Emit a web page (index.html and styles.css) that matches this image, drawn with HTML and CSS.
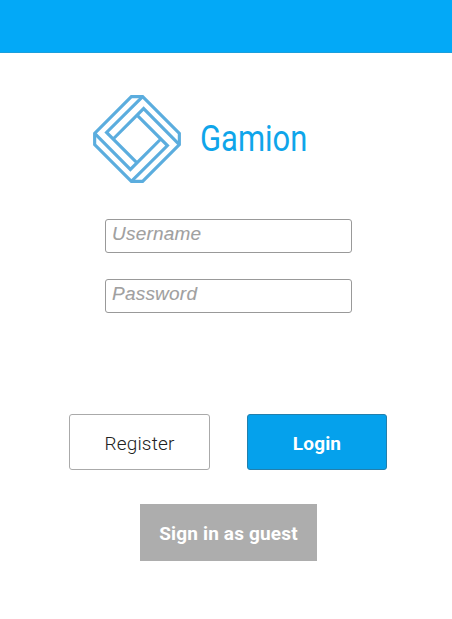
FILE: index.html
```html
<!DOCTYPE html>
<html lang="en">
<head>
<meta charset="utf-8">
<title>Gamion</title>
<link rel="stylesheet" href="styles.css">
</head>
<body>
<header class="topbar"></header>
<main class="login">
  <div class="brand">
    <svg class="logo" viewBox="-133 -133 266 266" aria-hidden="true">
      <path d="M17-128H-17L-128-17V17L-17 128H17L128 17V-17Z"/>
      <path d="M17-128L-92-20L0 72M128 17L20-92L-72 0M-17 128L92 20L0-72M-128-17L-20 92L72 0"/>
    </svg>
    <h1 class="name"><span class="name-text">Gamion</span></h1>
  </div>
  <form class="form">
    <input class="field" type="text" placeholder="Username">
    <input class="field" type="password" placeholder="Password">
    <div class="actions">
      <button class="button" type="button">Register</button>
      <button class="button primary" type="button">Login</button>
    </div>
    <button class="guest" type="button">Sign in as guest</button>
  </form>
</main>
</body>
</html>
```
FILE: styles.css
```css
* { box-sizing: border-box; }
body {
  margin: 0;
  height: 619px;
  overflow: hidden;
  background: #fff;
  font-family: Roboto, "Liberation Sans", sans-serif;
}
.topbar { height: 53px; background: #03a9f7; border-bottom: 1px solid #1b9fdc; }
.login { padding-top: 42px; }
.brand { display: flex; align-items: center; margin-left: 93px; height: 88px; }
.logo { width: 88px; height: 88px; fill: none; stroke: #5badde; stroke-width: 9.5; }
.name {
  margin: 0 0 0 19px;
  color: #0fa5ea;
  font-size: 37px;
  font-weight: 400;
  line-height: 44px;
}
.name-text {
  display: inline-block;
  transform: scaleX(.836);
  transform-origin: left;
}
.form { display: flex; flex-direction: column; padding-top: 36px; }
.field {
  width: 247px;
  height: 34px;
  margin: 0 0 26px 105px;
  padding: 0 6px 4px;
  border: 1px solid #999;
  border-radius: 3px;
  background: #fff;
  font: italic 19px "Liberation Sans", sans-serif;
  letter-spacing: .22px;
  outline: none;
}
.field::placeholder { color: #a0a0a0; opacity: 1; -webkit-text-stroke: .1px #a0a0a0; }
.actions { display: flex; gap: 37px; margin: 75px 0 0 69px; }
.button {
  width: 141px;
  height: 56px;
  padding: 2px 0 0;
  border: 1px solid #aaa;
  border-radius: 3px;
  background: #fff;
  color: #222;
  font: 300 19px Roboto, sans-serif;
  letter-spacing: .15px;
}
.primary { border-color: #237fac; background: #05a1ec; color: #fff; font-weight: 700; width: 140px; }
.guest {
  width: 177px;
  height: 57px;
  margin: 34px 0 0 140px;
  padding: 2px 0 0;
  border: 0;
  background: #adadad;
  color: #fff;
  font: 700 19px Roboto, sans-serif;
  letter-spacing: .17px;
}
```
